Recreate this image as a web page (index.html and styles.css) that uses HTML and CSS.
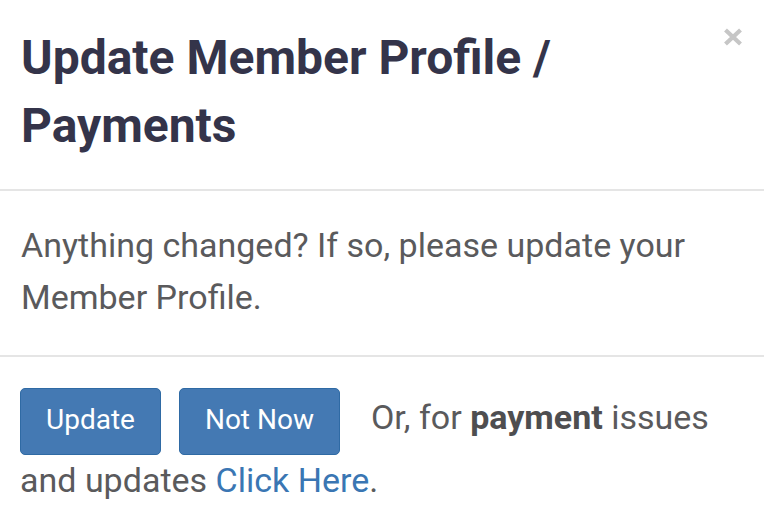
FILE: index.html
```html
<!DOCTYPE html>
<html>
<head>
<meta charset="utf-8">
<link rel="stylesheet" href="styles.css">
</head>
<body>
<div class="modal">
  <div class="modal-header">
    <button class="close" type="button" aria-label="Close"><svg width="20" height="18" viewBox="0 0 20 18"><path d="M2.5 2 L17.5 16 M17.5 2 L2.5 16" stroke="#c6c6c6" stroke-width="4.2" stroke-linecap="butt"/></svg></button>
    <h4 class="modal-title">Update Member Profile / Payments</h4>
  </div>
  <div class="modal-body">
    <p>Anything changed? If so, please update your Member Profile.</p>
  </div>
  <div class="modal-footer"><button class="btn" type="button">Update</button><button class="btn" type="button">Not Now</button><span class="note">Or, for <b>payment</b> issues and updates <a href="#">Click Here</a>.</span></div>
</div>
</body>
</html>
```
FILE: styles.css
```css
html, body {
  margin: 0;
  padding: 0;
  background: #ffffff;
}
body {
  font-family: Roboto, "Liberation Sans", sans-serif;
  color: #5a5a5c;
  width: 764px;
  height: 525px;
  overflow: hidden;
}
.modal-header {
  position: relative;
  padding: 24px 21px 29px 21px;
  border-bottom: 2px solid #e5e5e5;
}
.modal-title {
  margin: 0;
  font-size: 48px;
  line-height: 68px;
  font-weight: 700;
  color: #34344a;
}
.close {
  position: absolute;
  top: 28px;
  right: 21px;
  border: 0;
  background: none;
  padding: 0;
  width: 20px;
  height: 18px;
  display: block;
}
.close svg {
  display: block;
}
.modal-body {
  padding: 28px 21px 32px 21px;
  border-bottom: 2px solid #e5e5e5;
}
.modal-body p {
  margin: 0;
  font-size: 34px;
  line-height: 52px;
}
.modal-footer {
  padding: 31px 21px 0 20px;
  font-size: 34px;
  line-height: 50px;
}
.btn {
  display: inline-block;
  vertical-align: baseline;
  box-sizing: border-box;
  height: 67px;
  padding: 1px 25px 5px 25px;
  line-height: 59px;
  margin-right: 18px;
  background: #4479b3;
  border: 1px solid #2f6aa4;
  border-radius: 5px;
  color: #ffffff;
  font-family: Roboto, sans-serif;
  font-size: 28px;
}
.note {
  margin-left: 13px;
}
.note b {
  color: #4e4e50;
}
.note a {
  color: #3a76b3;
  text-decoration: none;
}
```
